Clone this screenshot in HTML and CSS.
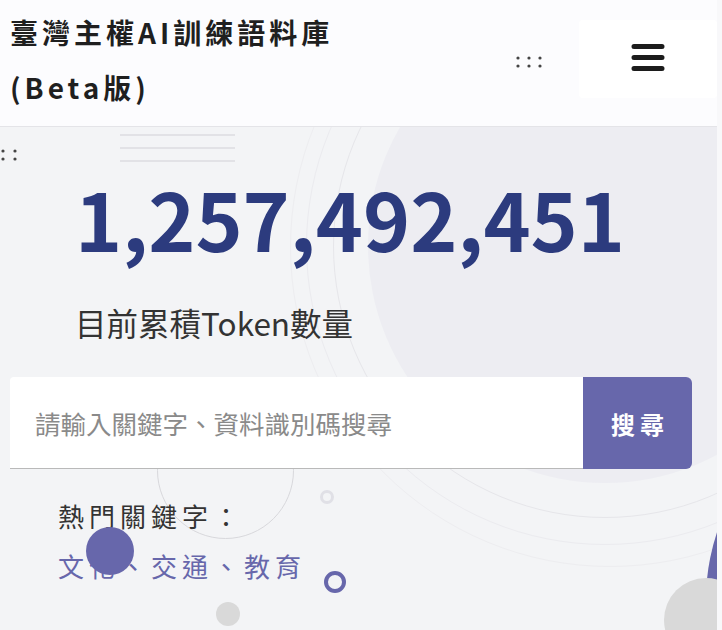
FILE: index.html
```html
<!DOCTYPE html>
<html lang="zh-Hant">
<head>
    <meta charset="UTF-8">
    <meta name="viewport" content="width=device-width, initial-scale=1.0">
    <title>臺灣主權AI訓練語料庫</title>
    <link rel="stylesheet" href="styles.css">
</head>
<body>
    <div class="page">
        <header class="topbar">
            <h1 class="site-title">臺灣主權AI訓練語料庫(Beta版)</h1>
            <div class="topbar-tools">
                <span class="dots-icon">
                    <svg width="28" height="14" viewBox="0 0 28 14">
                        <circle cx="3" cy="3" r="1.6"/><circle cx="14" cy="3" r="1.6"/><circle cx="25" cy="3" r="1.6"/>
                        <circle cx="3" cy="11" r="1.6"/><circle cx="14" cy="11" r="1.6"/><circle cx="25" cy="11" r="1.6"/>
                    </svg>
                </span>
                <button class="menu-btn" aria-label="選單">
                    <svg width="34" height="30" viewBox="0 0 34 30">
                        <path d="M3 3.5h28M3 14.5h28M3 25.5h28" stroke="#1c1c1c" stroke-width="5" stroke-linecap="round"/>
                    </svg>
                </button>
            </div>
        </header>

        <main class="hero">
            <!-- background decoration -->
            <div class="deco deco-disc"></div>
            <div class="deco deco-ring ring-1"></div>
            <div class="deco deco-ring ring-2"></div>
            <div class="deco deco-ring ring-3"></div>
            <div class="deco deco-small-ring"></div>
            <div class="deco deco-lines"><span></span><span></span><span></span></div>
            <div class="deco deco-dots">
                <svg width="18" height="14" viewBox="0 0 18 14">
                    <circle cx="3" cy="3" r="1.6"/><circle cx="15" cy="3" r="1.6"/>
                    <circle cx="3" cy="11" r="1.6"/><circle cx="15" cy="11" r="1.6"/>
                </svg>
            </div>
            <div class="deco deco-purple-edge"></div>
            <div class="deco deco-gray-big"></div>

            <div class="hero-inner">
                <div class="token-count">1,257,492,451</div>
                <p class="token-label">目前累積Token數量</p>

                <form class="search">
                    <input type="text" placeholder="請輸入關鍵字、資料識別碼搜尋">
                    <button type="button" class="search-btn">搜尋</button>
                </form>

                <div class="hot">
                    <p class="hot-title">熱門關鍵字：</p>
                    <p class="hot-links"><a href="#">文化</a>、<a href="#">交通</a>、<a href="#">教育</a></p>
                </div>
            </div>

            <div class="deco deco-purple-dot"></div>
            <div class="deco deco-purple-ring"></div>
            <div class="deco deco-light-ring"></div>
            <div class="deco deco-gray-dot"></div>
        </main>
    </div>
</body>
</html>
```

FILE: styles.css
```css
/* Base */
:root {
    --navy: #2c3b7e;
    --purple: #6767ab;
    --text-dark: #2f2f2f;
    --text-muted: #8a8a8a;
    --bg-page: #f3f4f6;
    --bg-disc: #ededf2;
    --white: #ffffff;
}

* {
    margin: 0;
    padding: 0;
    box-sizing: border-box;
}

html {
    background: #f8f8fa;
}

body {
    font-family: "Noto Sans CJK TC", "Noto Sans", sans-serif;
    color: var(--text-dark);
}

.page {
    width: 717px;
    height: 630px;
    overflow: hidden;
    background: var(--bg-page);
}

/* Header */
.topbar {
    position: relative;
    z-index: 2;
    height: 127px;
    display: flex;
    justify-content: space-between;
    background: #fcfcfe;
    border-bottom: 1px solid #e4e4e8;
}

.site-title {
    max-width: 345px;
    padding: 5px 0 0 10px;
    font-size: 28px;
    font-weight: 700;
    line-height: 55px;
    letter-spacing: 4px;
    color: #1f1f1f;
}

.topbar-tools {
    display: flex;
    align-items: flex-start;
    padding-top: 20px;
}

.dots-icon {
    display: block;
    margin: 35px 36px 0 0;
}

.dots-icon svg,
.deco-dots svg {
    display: block;
    fill: #444;
}

.menu-btn {
    width: 138px;
    height: 78px;
    border: none;
    border-radius: 4px;
    background: var(--white);
    display: flex;
    align-items: center;
    justify-content: center;
    padding: 0 0 2px;
    cursor: pointer;
}

/* Hero */
.hero {
    position: relative;
    height: 503px;
    overflow: hidden;
}

.hero-inner {
    position: relative;
    padding: 48px 25px 0 10px;
}

.token-count {
    margin-left: 65px;
    font-size: 80px;
    font-weight: 700;
    line-height: 84px;
    color: var(--navy);
}

.token-label {
    margin: 43px 0 0 65px;
    font-size: 31.5px;
    line-height: 40px;
    color: #333;
}

.search {
    display: flex;
    height: 92px;
    margin-top: 35px;
}

.search input {
    flex: 1;
    border: none;
    border-bottom: 1px solid #b9b9b9;
    border-radius: 4px 0 0 0;
    padding: 0 25px;
    font-family: inherit;
    font-size: 25.5px;
    color: var(--text-dark);
    background: var(--white);
    outline: none;
}

.search input::placeholder {
    color: var(--text-muted);
}

.search-btn {
    width: 109px;
    border: none;
    border-radius: 0 6px 6px 0;
    background: var(--purple);
    color: var(--white);
    font-family: inherit;
    font-size: 24px;
    font-weight: 700;
    letter-spacing: 5px;
    padding-left: 5px;
    cursor: pointer;
}

.hot {
    padding: 22px 0 0 48px;
    font-size: 26px;
    line-height: 50px;
    letter-spacing: 5px;
}

.hot-title {
    color: #333;
}

.hot-links {
    color: var(--purple);
}

.hot-links a {
    color: var(--purple);
    text-decoration: none;
}

/* Decorations */
.deco {
    position: absolute;
    border-radius: 50%;
    pointer-events: none;
}

.deco-disc {
    left: 368px;
    top: -118px;
    width: 474px;
    height: 474px;
    background: var(--bg-disc);
}

.deco-ring {
    border: 1px solid #e6e6ea;
}

.ring-1 {
    left: 333px;
    top: -153px;
    width: 544px;
    height: 544px;
}

.ring-2 {
    left: 306px;
    top: -180px;
    width: 598px;
    height: 598px;
    border-color: #ebebef;
}

.ring-3 {
    left: 290px;
    top: -200px;
    width: 640px;
    height: 640px;
    border-color: #ededf0;
}

.deco-small-ring {
    left: 157px;
    top: 275px;
    width: 137px;
    height: 137px;
    border: 1px solid #d8d8dc;
}

.deco-lines {
    left: 120px;
    top: 7px;
    width: 115px;
    border-radius: 0;
    display: flex;
    flex-direction: column;
    gap: 11px;
}

.deco-lines span {
    display: block;
    height: 2px;
    background: #e2e2e6;
}

.deco-dots {
    left: 0;
    top: 21px;
    border-radius: 0;
}

.deco-purple-edge {
    left: 706px;
    top: 259px;
    width: 428px;
    height: 428px;
    background: var(--purple);
}

.deco-gray-big {
    left: 664px;
    top: 451px;
    width: 84px;
    height: 84px;
    background: #d9d9d9;
}

.deco-purple-dot {
    left: 86px;
    top: 400px;
    width: 48px;
    height: 48px;
    background: var(--purple);
}

.deco-purple-ring {
    left: 324px;
    top: 444px;
    width: 22px;
    height: 22px;
    border: 4px solid var(--purple);
}

.deco-light-ring {
    left: 320px;
    top: 363px;
    width: 14px;
    height: 14px;
    border: 3px solid #e0e0e6;
}

.deco-gray-dot {
    left: 216px;
    top: 475px;
    width: 24px;
    height: 24px;
    background: #d9d9d9;
}
```
